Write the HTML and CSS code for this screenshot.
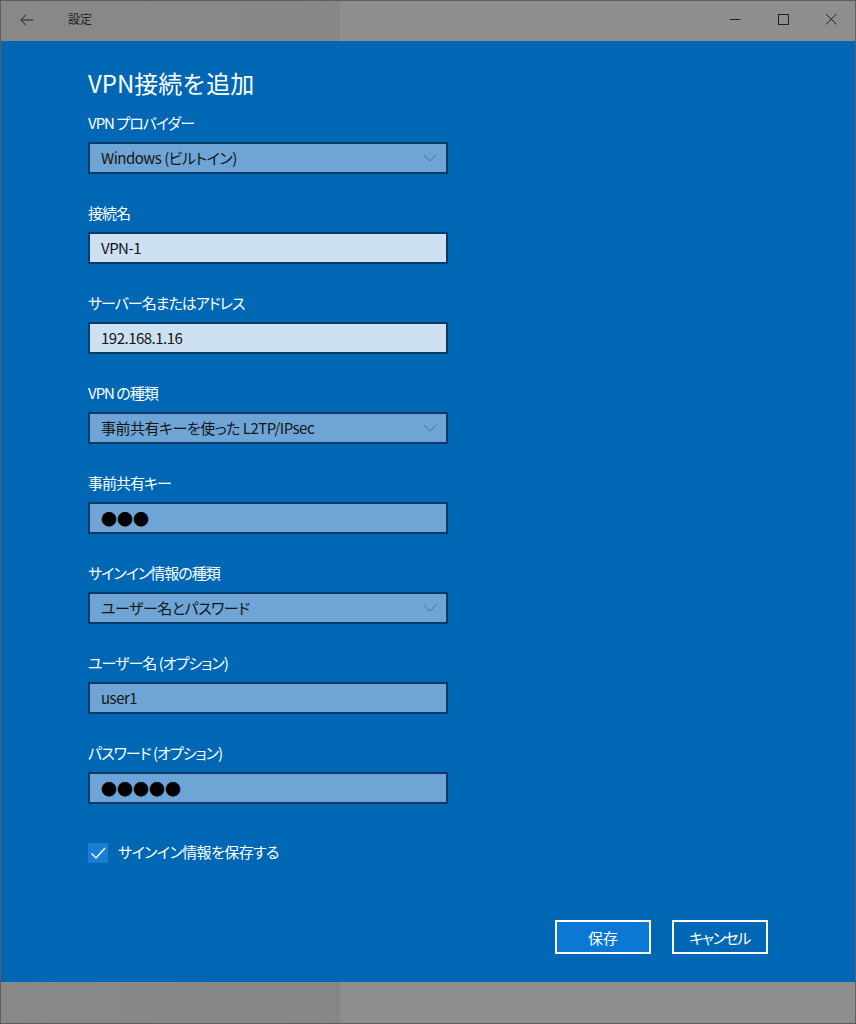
FILE: index.html
```html
<!DOCTYPE html>
<html lang="ja">
<head>
<meta charset="utf-8">
<title>設定</title>
<link rel="stylesheet" href="styles.css">
</head>
<body>
<div class="window">
  <header class="titlebar">
    <div class="tb-left">
      <svg class="back" width="14" height="12" viewBox="0 0 14 12"><path d="M13.5 6H1M6 0.8L0.8 6L6 11.2" fill="none" stroke="#222" stroke-width="1"/></svg>
      <span class="tb-title">設定</span>
    </div>
    <div class="tb-controls">
      <svg width="12" height="12" viewBox="0 0 12 12"><path d="M1 6.5H11.5" stroke="#222" stroke-width="1"/></svg>
      <svg width="12" height="12" viewBox="0 0 12 12"><rect x="1.5" y="1.5" width="10" height="10" fill="none" stroke="#222" stroke-width="1"/></svg>
      <svg width="12" height="12" viewBox="0 0 12 12"><path d="M1 1L11.5 11.5M11.5 1L1 11.5" stroke="#222" stroke-width="1"/></svg>
    </div>
  </header>
  <main class="content">
    <h1 class="heading">VPN接続を追加</h1>
    <div class="form">
      <div class="field">
        <div class="label">VPN プロバイダー</div>
        <div class="box select"><span>Windows (ビルトイン)</span><svg class="chev" width="14" height="8" viewBox="0 0 14 8"><path d="M0.5 0.5L7 7L13.5 0.5" fill="none" stroke="#4a6f92" stroke-width="1"/></svg></div>
      </div>
      <div class="field">
        <div class="label">接続名</div>
        <div class="box text"><span>VPN-1</span></div>
      </div>
      <div class="field">
        <div class="label">サーバー名またはアドレス</div>
        <div class="box text"><span>192.168.1.16</span></div>
      </div>
      <div class="field">
        <div class="label">VPN の種類</div>
        <div class="box select"><span>事前共有キーを使った L2TP/IPsec</span><svg class="chev" width="14" height="8" viewBox="0 0 14 8"><path d="M0.5 0.5L7 7L13.5 0.5" fill="none" stroke="#4a6f92" stroke-width="1"/></svg></div>
      </div>
      <div class="field">
        <div class="label">事前共有キー</div>
        <div class="box select"><span class="dots">●●●</span></div>
      </div>
      <div class="field">
        <div class="label">サインイン情報の種類</div>
        <div class="box select"><span>ユーザー名とパスワード</span><svg class="chev" width="14" height="8" viewBox="0 0 14 8"><path d="M0.5 0.5L7 7L13.5 0.5" fill="none" stroke="#4a6f92" stroke-width="1"/></svg></div>
      </div>
      <div class="field">
        <div class="label">ユーザー名 (オプション)</div>
        <div class="box select"><span>user1</span></div>
      </div>
      <div class="field">
        <div class="label">パスワード (オプション)</div>
        <div class="box select"><span class="dots">●●●●●</span></div>
      </div>
    </div>
    <label class="check">
      <span class="checkbox"><svg width="20" height="20" viewBox="0 0 20 20"><path d="M3.5 10.5L8 15L17 5" fill="none" stroke="#fff" stroke-width="1.4"/></svg></span>
      <span class="check-label">サインイン情報を保存する</span>
    </label>
    <div class="actions">
      <button class="btn primary">保存</button>
      <button class="btn kana">キャンセル</button>
    </div>
  </main>
  <footer class="bottombar"></footer>
</div>
</body>
</html>
```

FILE: styles.css
```css
* { box-sizing: border-box; }
html, body { margin: 0; padding: 0; }
body {
  width: 856px;
  height: 1024px;
  font-family: "Noto Sans CJK JP", "Noto Sans", sans-serif;
  overflow: hidden;
}
.window {
  width: 856px;
  height: 1024px;
  display: flex;
  flex-direction: column;
  border: 1px solid #5e5e5e;
}
.titlebar {
  height: 40px;
  flex: none;
  display: flex;
  align-items: center;
  justify-content: space-between;
  background: linear-gradient(to right, #888888 0, #878787 339px, #8e8e8e 339px);
}
.tb-left {
  display: flex;
  align-items: center;
  padding-left: 19px;
}
.back { display: block; margin-top: -2px; }
.tb-title {
  margin-left: 34px;
  font-size: 12px;
  color: #222;
  margin-top: -5px;
}
.tb-controls {
  display: flex;
  align-items: center;
  gap: 36px;
  padding-right: 18px;
  margin-top: -4px;
}
.tb-controls svg { display: block; }
.content {
  flex: 1;
  background: #0067b5;
  padding: 25px 87px 0 87px;
  display: flex;
  flex-direction: column;
}
.heading {
  margin: 0;
  font-size: 24px;
  font-weight: 400;
  line-height: 34px;
  color: #fff;
}
.form {
  display: flex;
  flex-direction: column;
  gap: 29px;
  margin-top: 13px;
}
.label {
  font-size: 15px;
  line-height: 20px;
  color: #fff;
  margin-bottom: 9px;
  font-feature-settings: "palt";
  letter-spacing: -1px;
}
.box {
  width: 360px;
  height: 32px;
  border: 2px solid #0c3a66;
  display: flex;
  align-items: center;
  justify-content: space-between;
  padding: 0 9px 0 11px;
  font-size: 15px;
  color: #151515;
}
.box span {
  line-height: 20px;
  margin-top: -1px;
  font-feature-settings: "palt";
  letter-spacing: -0.5px;
}
.select { background: #6ea5d6; }
.text { background: #cde1f2; }
.box span.dots {
  font-size: 16px;
  color: #000;
  font-feature-settings: normal;
  letter-spacing: 0;
}
.check {
  display: flex;
  align-items: center;
  margin-top: 39px;
  gap: 10px;
}
.checkbox {
  width: 20px;
  height: 20px;
  background: #1a7ed6;
  display: block;
}
.checkbox svg { display: block; }
.check-label {
  font-size: 15px;
  color: #fff;
  line-height: 20px;
  margin-top: -2px;
  font-feature-settings: "palt";
  letter-spacing: -0.6px;
}
.actions {
  display: flex;
  justify-content: flex-end;
  gap: 21px;
  margin-top: 57px;
}
.btn {
  width: 96px;
  height: 34px;
  border: 2px solid #fff;
  background: transparent;
  color: #fff;
  font-family: "Noto Sans CJK JP", "Noto Sans", sans-serif;
  font-size: 15px;
  padding: 0;
  font-feature-settings: "palt";
}
.btn.kana { letter-spacing: -1.5px; text-indent: -1px; }
.btn.primary { background: #0b78d5; }
.bottombar {
  height: 41px;
  flex: none;
  background: linear-gradient(to right, #888888 0, #868686 339px, #8e8e8e 339px);
}
```
